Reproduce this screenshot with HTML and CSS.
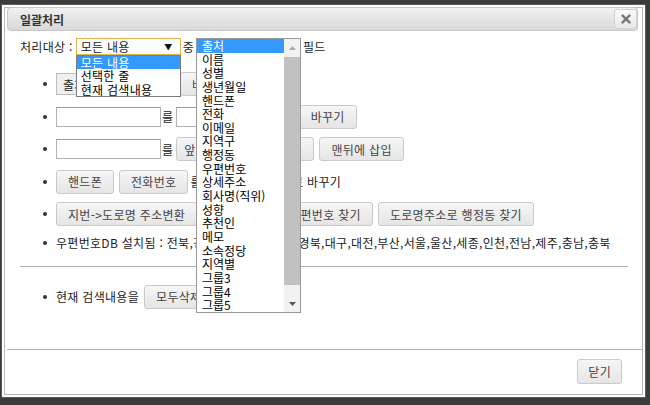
FILE: index.html
```html
<!DOCTYPE html>
<html lang="ko">
<head>
<meta charset="utf-8">
<title>일괄처리</title>
<link rel="stylesheet" href="styles.css">
</head>
<body>
<div class="dialog">
  <div class="titlebar">
    <span class="title">일괄처리</span>
    <span class="close"><svg width="10" height="10" viewBox="0 0 10 10"><path d="M1.6 1.6 L8.4 8.4 M8.4 1.6 L1.6 8.4" stroke="#7a7a7a" stroke-width="2.6" stroke-linecap="round"/></svg></span>
  </div>
  <div class="content">
    <div class="target-row">
      <span class="lbl">처리대상 :</span>
      <div class="select-wrap sw-target">
        <div class="select sel-focus"><span>모든 내용</span><span class="arrow">▼</span></div>
        <div class="dropdown dd-target">
          <div class="opt on">모든 내용</div>
          <div class="opt">선택한 줄</div>
          <div class="opt">현재 검색내용</div>
        </div>
      </div>
      <span class="mid">중</span>
      <div class="select-wrap sw-field">
        <div class="select"><span>출처</span><span class="arrow">▼</span></div>
        <div class="listbox">
          <div class="opts">
            <div class="opt on">출처</div>
            <div class="opt">이름</div>
            <div class="opt">성별</div>
            <div class="opt">생년월일</div>
            <div class="opt">핸드폰</div>
            <div class="opt">전화</div>
            <div class="opt">이메일</div>
            <div class="opt">지역구</div>
            <div class="opt">행정동</div>
            <div class="opt">우편번호</div>
            <div class="opt">상세주소</div>
            <div class="opt">회사명(직위)</div>
            <div class="opt">성향</div>
            <div class="opt">추천인</div>
            <div class="opt">메모</div>
            <div class="opt">소속정당</div>
            <div class="opt">지역별</div>
            <div class="opt">그룹3</div>
            <div class="opt">그룹4</div>
            <div class="opt">그룹5</div>
          </div>
          <div class="sbar">
            <div class="sb-btn"><svg width="7" height="4" viewBox="0 0 7 4"><path d="M0 4 L3.5 0 L7 4 Z" fill="#a9a9a9"/></svg></div>
            <div class="thumb"></div>
            <div class="track"></div>
            <div class="sb-btn"><svg width="7" height="4" viewBox="0 0 7 4"><path d="M0 0 L7 0 L3.5 4 Z" fill="#555"/></svg></div>
          </div>
        </div>
      </div>
      <span class="mid">필드</span>
    </div>

    <ul class="ops">
      <li><div class="select gray-sel"><span>출처</span><span class="arrow">▼</span></div><button class="btn">바꾸기</button></li>
      <li><input class="inp" type="text"><span class="txt">를</span><input class="inp" type="text"><span class="txt">로</span><button class="btn">바꾸기</button></li>
      <li><input class="inp" type="text"><span class="txt">를</span><button class="btn btn-a">앞에 삽입</button><button class="btn btn-b">뒤에</button><button class="btn">맨뒤에 삽입</button></li>
      <li><button class="btn">핸드폰</button><button class="btn">전화번호</button><span class="txt-fmt">를 하이픈 형식 번호로 바꾸기</span></li>
      <li><button class="btn">지번-&gt;도로명 주소변환</button><button class="btn btn-c">주소정리</button><button class="btn">우편번호 찾기</button><button class="btn">도로명주소로 행정동 찾기</button></li>
      <li class="plain">우편번호DB 설치됨 : 전북,경기,강원,경남,광주,경북,대구,대전,부산,서울,울산,세종,인천,전남,제주,충남,충북</li>
    </ul>
    <div class="divider"></div>
    <ul class="ops ops-last">
      <li><span class="txt-lead">현재 검색내용을</span><button class="btn">모두삭제</button></li>
    </ul>
  </div>
  <div class="buttonpane">
    <button class="btn btn-close">닫기</button>
  </div>
</div>
</body>
</html>
```

FILE: styles.css
```css
* { box-sizing: border-box; }
html, body { margin: 0; padding: 0; }
body {
  width: 650px;
  height: 405px;
  overflow: hidden;
  background: #3b3b3b;
  font-family: "Noto Sans CJK KR", "Noto Sans", sans-serif;
  font-size: 12px;
  letter-spacing: 0.3px;
  color: #222;
}
.dialog {
  margin: 4px 0 0 1px;
  width: 645px;
  height: 394px;
  background: #fff;
  border: 1px solid #5a5a5a;
  box-shadow: inset 0 0 0 2px #fff, inset 0 0 0 3px #b8b8b8;
  display: flex;
  flex-direction: column;
}
.titlebar {
  margin: 2px 7px 0 5px;
  height: 24px;
  border: 1px solid #c6c6c6;
  border-radius: 4px;
  background: linear-gradient(#f1f1f1, #d9d9d9);
  display: flex;
  align-items: center;
  justify-content: space-between;
  padding: 0 0 0 12px;
}
.title {
  font-weight: bold;
  font-size: 12px;
  letter-spacing: 0;
  color: #333;
}
.close {
  width: 23px;
  height: 20px;
  border: 1px solid #d2d2d2;
  border-radius: 3px;
  background: linear-gradient(#fbfbfb, #e8e8e8);
  display: flex;
  align-items: center;
  justify-content: center;
}
.content {
  flex: 1;
  padding: 7px 17px 0 18px;
}
.target-row {
  display: flex;
  align-items: center;
  height: 17px;
}
.mid { margin-left: 2px; }
.select-wrap { position: relative; }
.sw-target { margin-left: 3px; }
.sw-field { margin-left: 2px; }
.select {
  width: 105px;
  height: 17px;
  border: 1px solid #aaa;
  background: #fff;
  display: flex;
  align-items: center;
  justify-content: space-between;
  padding: 0 7px 0 4px;
}
.sel-focus { border-color: #e2b347; }
.arrow { font-size: 8px; color: #111; }
.dropdown {
  position: absolute;
  left: 0;
  top: 17px;
  width: 105px;
  border: 1px solid #7d7d7d;
  background: #fff;
  z-index: 5;
}
.opt {
  line-height: 13.3px;
  height: 13.3px;
  padding-left: 4px;
  color: #000;
  white-space: nowrap;
}
.opt.on { background: #3399ff; color: #fff; }
.listbox {
  position: absolute;
  left: 0;
  top: 0;
  width: 105px;
  height: 275px;
  border: 1px solid #9a9a9a;
  background: #fff;
  display: flex;
  z-index: 6;
}
.listbox .opts { flex: 1; }
.listbox .opt { height: 13.65px; line-height: 13.65px; padding-left: 5px; letter-spacing: 0; }
.sbar {
  width: 16px;
  background: #f2f2f2;
  display: flex;
  flex-direction: column;
}
.sb-btn {
  height: 17px;
  display: flex;
  align-items: center;
  justify-content: center;
}
.thumb {
  height: 228px;
  margin-top: 1px;
  background: #c1c1c1;
}
.track { flex: 1; }

ul.ops {
  list-style: none;
  margin: 17px 0 0 0;
  padding: 0 0 0 23px;
}
ul.ops li {
  display: flex;
  align-items: center;
  height: 24px;
  margin-bottom: 8.5px;
  white-space: nowrap;
}
ul.ops li::before {
  content: "";
  width: 4px;
  height: 4px;
  border-radius: 50%;
  background: #333;
  margin-right: 9px;
  flex: none;
}
ul.ops li.plain { height: 16px; margin-bottom: 0; }
.divider {
  margin-top: 15px;
  border-top: 1px solid #b3b3b3;
}
ul.ops.ops-last { margin-top: 18px; }

.btn {
  font-family: inherit;
  font-size: 12px;
  letter-spacing: 0.3px;
  height: 24px;
  padding: 0 11px;
  border: 1px solid #cacaca;
  border-radius: 3px;
  background: linear-gradient(#f6f6f6, #e5e5e5);
  color: #444;
  margin: 0 0 0 5px;
  white-space: nowrap;
}
li > .btn:first-of-type { margin-left: 0; }
.gray-sel {
  width: 120px;
  height: 22px;
  background: #efefef;
  border-color: #bdbdbd;
  padding-left: 6px;
  margin-right: 4px;
}
.gray-sel + .btn { margin-left: 0; }
.inp {
  width: 105px;
  height: 20px;
  border: 1px solid #b3b3b3;
  border-top-color: #9c9c9c;
  margin: 0;
  padding: 0;
}
.txt { margin: 0 3px 0 1px; }
li > .txt + .btn { margin-left: 2px; }
li > .btn.btn-a { padding: 0 7px; margin-left: 0; }
.btn-b { width: 68px; }
.txt-fmt { margin-left: 2px; }
.btn-c { width: 70px; }
.txt-lead { margin-right: 5px; }

.buttonpane {
  margin: 0 2px 0 5px;
  border-top: 1px solid #b3b3b3;
  padding: 9px 21px 13px 0;
  display: flex;
  justify-content: flex-end;
}
.btn-close { height: 25px; padding: 0 10px; }
```
